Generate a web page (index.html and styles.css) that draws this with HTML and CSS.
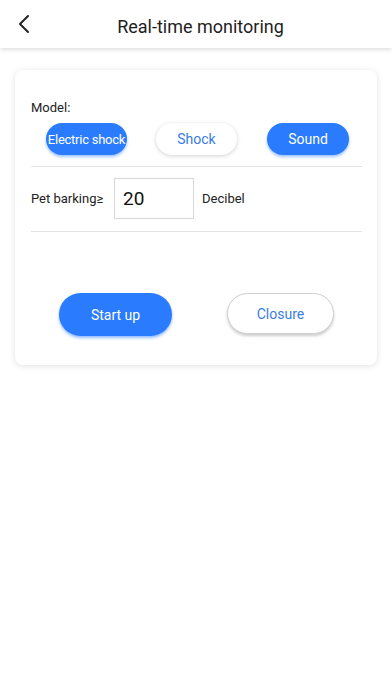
FILE: index.html
```html
<!DOCTYPE html>
<html>
<head>
<meta charset="utf-8">
<link rel="stylesheet" href="styles.css">
</head>
<body>
<header class="topbar">
  <svg class="back" width="14" height="20" viewBox="0 0 14 20"><path d="M11 2 L3 10 L11 18" fill="none" stroke="#222" stroke-width="2" stroke-linecap="round" stroke-linejoin="round"/></svg>
  <div class="title">Real-time monitoring</div>
</header>
<main class="card">
  <div class="label">Model:</div>
  <div class="modes">
    <div class="pill on wide"><span>Electric shock</span></div>
    <div class="pill off"><span>Shock</span></div>
    <div class="pill on"><span>Sound</span></div>
  </div>
  <div class="divider"></div>
  <div class="bark">
    <span class="bark-label">Pet barking≥</span>
    <div class="input">20</div>
    <span class="unit">Decibel</span>
  </div>
  <div class="divider"></div>
  <div class="actions">
    <div class="btn start">Start up</div>
    <div class="btn close">Closure</div>
  </div>
</main>
</body>
</html>
```
FILE: styles.css
```css
* { box-sizing: border-box; }
html, body { margin: 0; padding: 0; background: #fff; }
body { font-family: Roboto, "Noto Sans", sans-serif; color: #222; width: 392px; height: 696px; overflow: hidden; }

.topbar {
  height: 48px;
  display: flex;
  align-items: center;
  position: relative;
  box-shadow: 0 2px 4px rgba(0,0,0,0.12);
  background: #fff;
}
.back { margin-left: 17px; flex: none; }
.title {
  flex: 1;
  text-align: center;
  font-size: 18px;
  color: #1e1e1e;
  padding-right: 22px;
  margin-top: 4px;
}

.card {
  margin: 22px 15px 0;
  height: 295px;
  border-radius: 8px;
  background: #fff;
  box-shadow: 0 1px 6px rgba(0,0,0,0.12);
  padding: 30px 15px 0 16px;
}
.label { font-size: 13px; line-height: 16px; color: #222; }
.modes {
  display: flex;
  gap: 29px;
  padding-left: 15px;
  margin-top: 7px;
}
.pill {
  width: 81px;
  height: 32px;
  border-radius: 16px;
  display: flex;
  justify-content: center;
  align-items: center;
  overflow: hidden;
  font-size: 14px;
  white-space: nowrap;
}
.pill span { flex: none; }
.pill.wide { font-size: 13px; letter-spacing: -0.25px; }
.pill.on { background: #2a7bfe; color: #fff; box-shadow: 0 2px 3px rgba(42,123,254,0.45); }
.pill.off { background: #fff; color: #3a7de0; box-shadow: 0 1px 4px rgba(0,0,0,0.18); }
.modes .pill:nth-child(3) { width: 82px; margin-left: 1px; }

.divider { height: 1px; background: #e3e3e3; margin-top: 11px; }

.bark {
  display: flex;
  align-items: center;
  padding: 11px 0 12px;
  font-size: 13px;
}
.bark-label { width: 83px; color: #222; }
.input {
  width: 80px;
  height: 41px;
  border: 1px solid #d8d8d8;
  font-size: 19px;
  display: flex;
  align-items: center;
  padding-left: 8px;
  color: #111;
}
.unit { margin-left: 8px; color: #222; }
.bark + .divider { margin-top: 0; }

.actions {
  display: flex;
  align-items: flex-start;
  margin-top: 61px;
  padding-left: 28px;
}
.btn {
  display: flex;
  justify-content: center;
  align-items: center;
  font-size: 14px;
  border-radius: 22px;
}
.btn.start {
  width: 113px;
  height: 43px;
  background: #2a7bfe;
  color: #fff;
  box-shadow: 0 2px 3px rgba(42,123,254,0.5);
}
.btn.close {
  width: 107px;
  height: 41px;
  margin-left: 55px;
  background: #fff;
  color: #3a7de0;
  border: 1px solid #cfcfcf;
  box-shadow: 0 2px 3px rgba(0,0,0,0.2);
}
```
